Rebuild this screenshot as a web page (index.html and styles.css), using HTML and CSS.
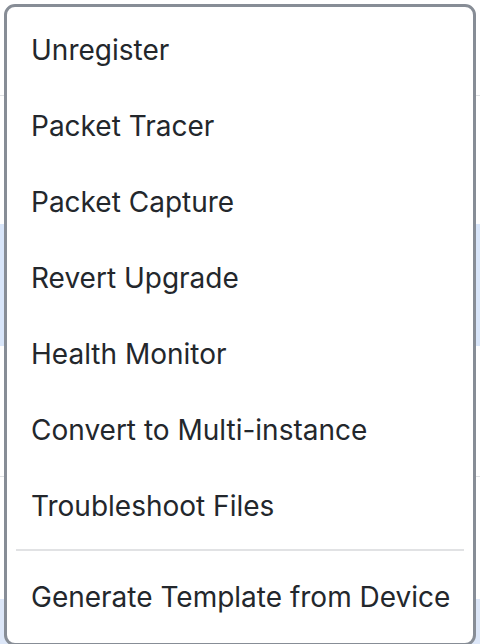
FILE: index.html
```html
<!DOCTYPE html>
<html lang="en">
<head>
    <meta charset="UTF-8">
    <meta name="viewport" content="width=device-width, initial-scale=1.0">
    <title>Device Actions</title>
    <link rel="stylesheet" href="styles.css">
</head>
<body>
    <div class="page">
        <div class="row row-top"></div>
        <div class="row row-plain"></div>
        <div class="row row-selected"></div>
        <div class="row row-plain2"></div>
        <div class="row row-selected2"></div>
    </div>

    <div class="menu">
        <ul class="menu-list">
            <li class="menu-item">Unregister</li>
            <li class="menu-item">Packet Tracer</li>
            <li class="menu-item">Packet Capture</li>
            <li class="menu-item">Revert Upgrade</li>
            <li class="menu-item">Health Monitor</li>
            <li class="menu-item">Convert to Multi-instance</li>
            <li class="menu-item">Troubleshoot Files</li>
        </ul>
        <div class="divider"></div>
        <ul class="menu-list">
            <li class="menu-item">Generate Template from Device</li>
        </ul>
    </div>
</body>
</html>
```

FILE: styles.css
```css
body {
    margin: 0;
    font-family: Inter, "Noto Sans", sans-serif;
    background-color: #fff;
    overflow: hidden;
}
.page {
    height: 644px;
}
.row {
    border-bottom: 1px solid #dfe1e4;
}
.row-top {
    height: 95px;
}
.row-plain {
    height: 128px;
    border-bottom: none;
}
.row-selected {
    height: 122px;
    background-color: #d9e6fa;
    border-bottom: none;
}
.row-plain2 {
    height: 130px;
}
.row-selected2 {
    height: 46px;
    margin-top: 122px;
    background-color: #dde7f8;
    border-bottom: none;
}
.menu {
    position: absolute;
    top: 4px;
    left: 4px;
    width: 466px;
    height: 631px;
    background-color: #fff;
    border: 3px solid #878d96;
    border-radius: 11px;
    padding-top: 5px;
}
.menu-list {
    list-style: none;
    margin: 0;
    padding: 0;
}
.menu-item {
    padding: 19px 24px;
    font-size: 28px;
    line-height: 38px;
    color: #23272c;
    white-space: nowrap;
}
.divider {
    height: 2px;
    margin: 5px 9px 8px 9px;
    background-color: #e1e2e4;
}
```
